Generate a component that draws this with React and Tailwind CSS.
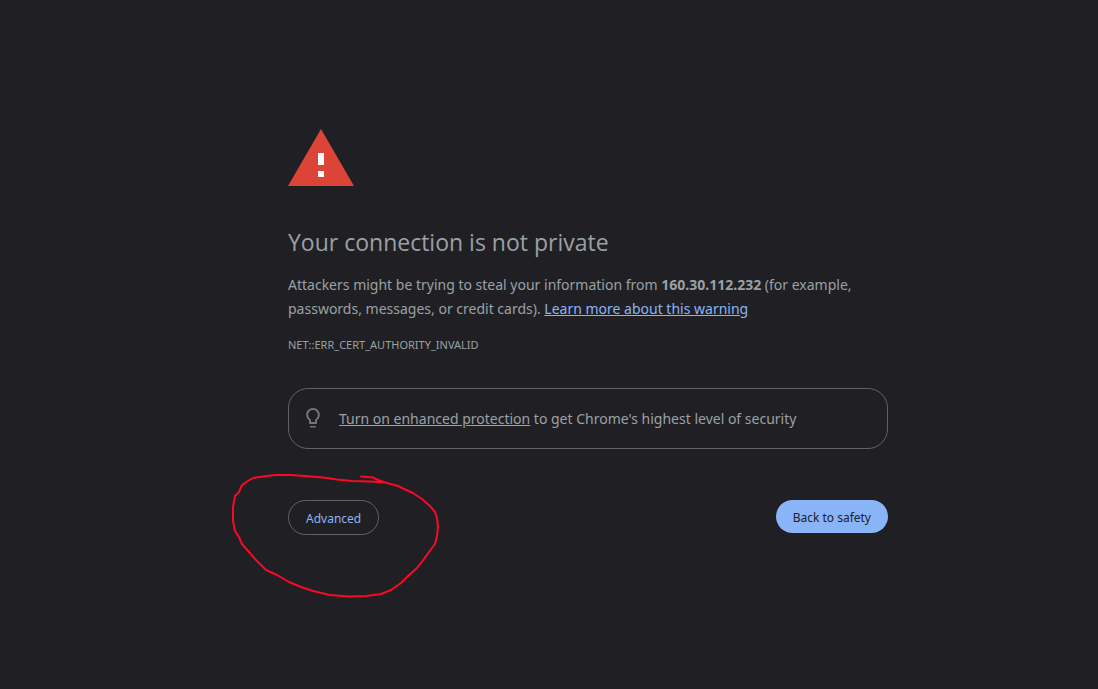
import { useState } from "react";

function WarningIcon() {
  return (
    <svg width="66" height="57" viewBox="0 0 66 57" className="block" role="img" aria-label="Warning">
      <path d="M33 0L66 57H0Z" fill="#db4437" />
      <path d="M30 24h6v12h-6zM30 42h6v6h-6z" fill="#fff" />
    </svg>
  );
}

function BulbIcon() {
  return (
    <svg width="24" height="24" viewBox="0 0 24 24" className="block shrink-0" fill="#757575" aria-hidden="true">
      <path d="M9 19.500c0 .5.4 1 1 1h4c.6 0 1-.5 1-1v-.6H9v.6zm3-18.500C8.100 1 5.200 4 5.200 7.700c0 2.300 1.100 4.200 2.800 5.500V16c0 .5.4 1 1 1h6c.6 0 1-.5 1-1v-2.800c1.700-1.300 2.800-3.200 2.800-5.500C18.800 4 15.900 1 12 1zm2.900 10.900l-.9.6V15h-4v-2.500l-.9-.6C7.800 11 7.200 9.400 7.200 7.800 7.200 5.100 9.300 3 12 3s4.800 2.100 4.800 4.800c0 1.600-.7 3.200-1.900 4.100z" />
    </svg>
  );
}

// Hand-drawn loop around the Advanced button
function Scribble() {
  return (
    <svg
      width="220"
      height="140"
      viewBox="0 0 220 140"
      className="pointer-events-none absolute -top-[35px] -left-[63px]"
      fill="none"
      stroke="#fa0828"
      strokeWidth="2"
      strokeLinecap="round"
      strokeLinejoin="round"
      aria-hidden="true"
    >
      <path d="M136 11.500L148 12.500L153 15L162 18L173 21L179 24L188 28L197 34L205 41L210 47L212 53L213 62L212 71L210 79L204 87L199 94L192 103L183 111L176 118L166 125L156 129L141 131L124 131.500L105 130L88 126L76 122L64 117L52 110L41 105L31 95L24 87L17 79L14 72L10 66L8 56L8 42L10 31L14 27L17 20L23 16L28 13L38 11.500L50 10L65 10L80 11L98 12.500L112 14.500L127 16L145 16.500L160 17.500" />
    </svg>
  );
}

export default function App() {
  const [showDetails, setShowDetails] = useState(false);

  return (
    <div className="min-h-screen bg-[#202024] pl-[78px] pt-[129px] font-['Noto_Sans','Open_Sans',sans-serif] text-[#9aa0a6]">
      <main className="mx-auto w-full max-w-[600px]">
        <WarningIcon />

        <h1 className="mt-10 font-['Open_Sans','Noto_Sans',sans-serif] text-[23px] leading-8">
          Your connection is not private
        </h1>

        <p className="mt-[15px] text-[14px] leading-6">
          Attackers might be trying to steal your information from <strong>160.30.112.232</strong> (for example,
          passwords, messages, or credit cards).{" "}
          <a href="#learn" className="text-[#8ab4f8] underline">
            Learn more about this warning
          </a>
        </p>

        <p className="mt-3 text-[11px] leading-6">NET::ERR_CERT_AUTHORITY_INVALID</p>

        <div className="mt-[31px] flex items-center gap-3.5 rounded-[20px] border border-[#5f6368] px-3 pt-[18px] pb-[17px]">
          <BulbIcon />
          <p className="text-[14px] leading-6">
            <a href="#protection" className="underline">
              Turn on enhanced protection
            </a>{" "}
            to get Chrome's highest level of security
          </p>
        </div>

        <div className="mt-[51px] flex items-start justify-between">
          <div className="relative">
            <button
              type="button"
              aria-expanded={showDetails}
              onClick={() => setShowDetails(!showDetails)}
              className="block cursor-pointer rounded-full border border-[#5f6368] px-[17px] pt-[9px] pb-[7px] text-[12px] leading-[17px] text-[#8ab4f8]"
            >
              Advanced
            </button>
            <Scribble />
          </div>
          <button
            type="button"
            className="block cursor-pointer rounded-full bg-[#8ab4f8] px-[17px] pt-[9px] pb-[7px] text-[12px] leading-[17px] text-[#202124]"
          >
            Back to safety
          </button>
        </div>
      </main>
    </div>
  );
}
